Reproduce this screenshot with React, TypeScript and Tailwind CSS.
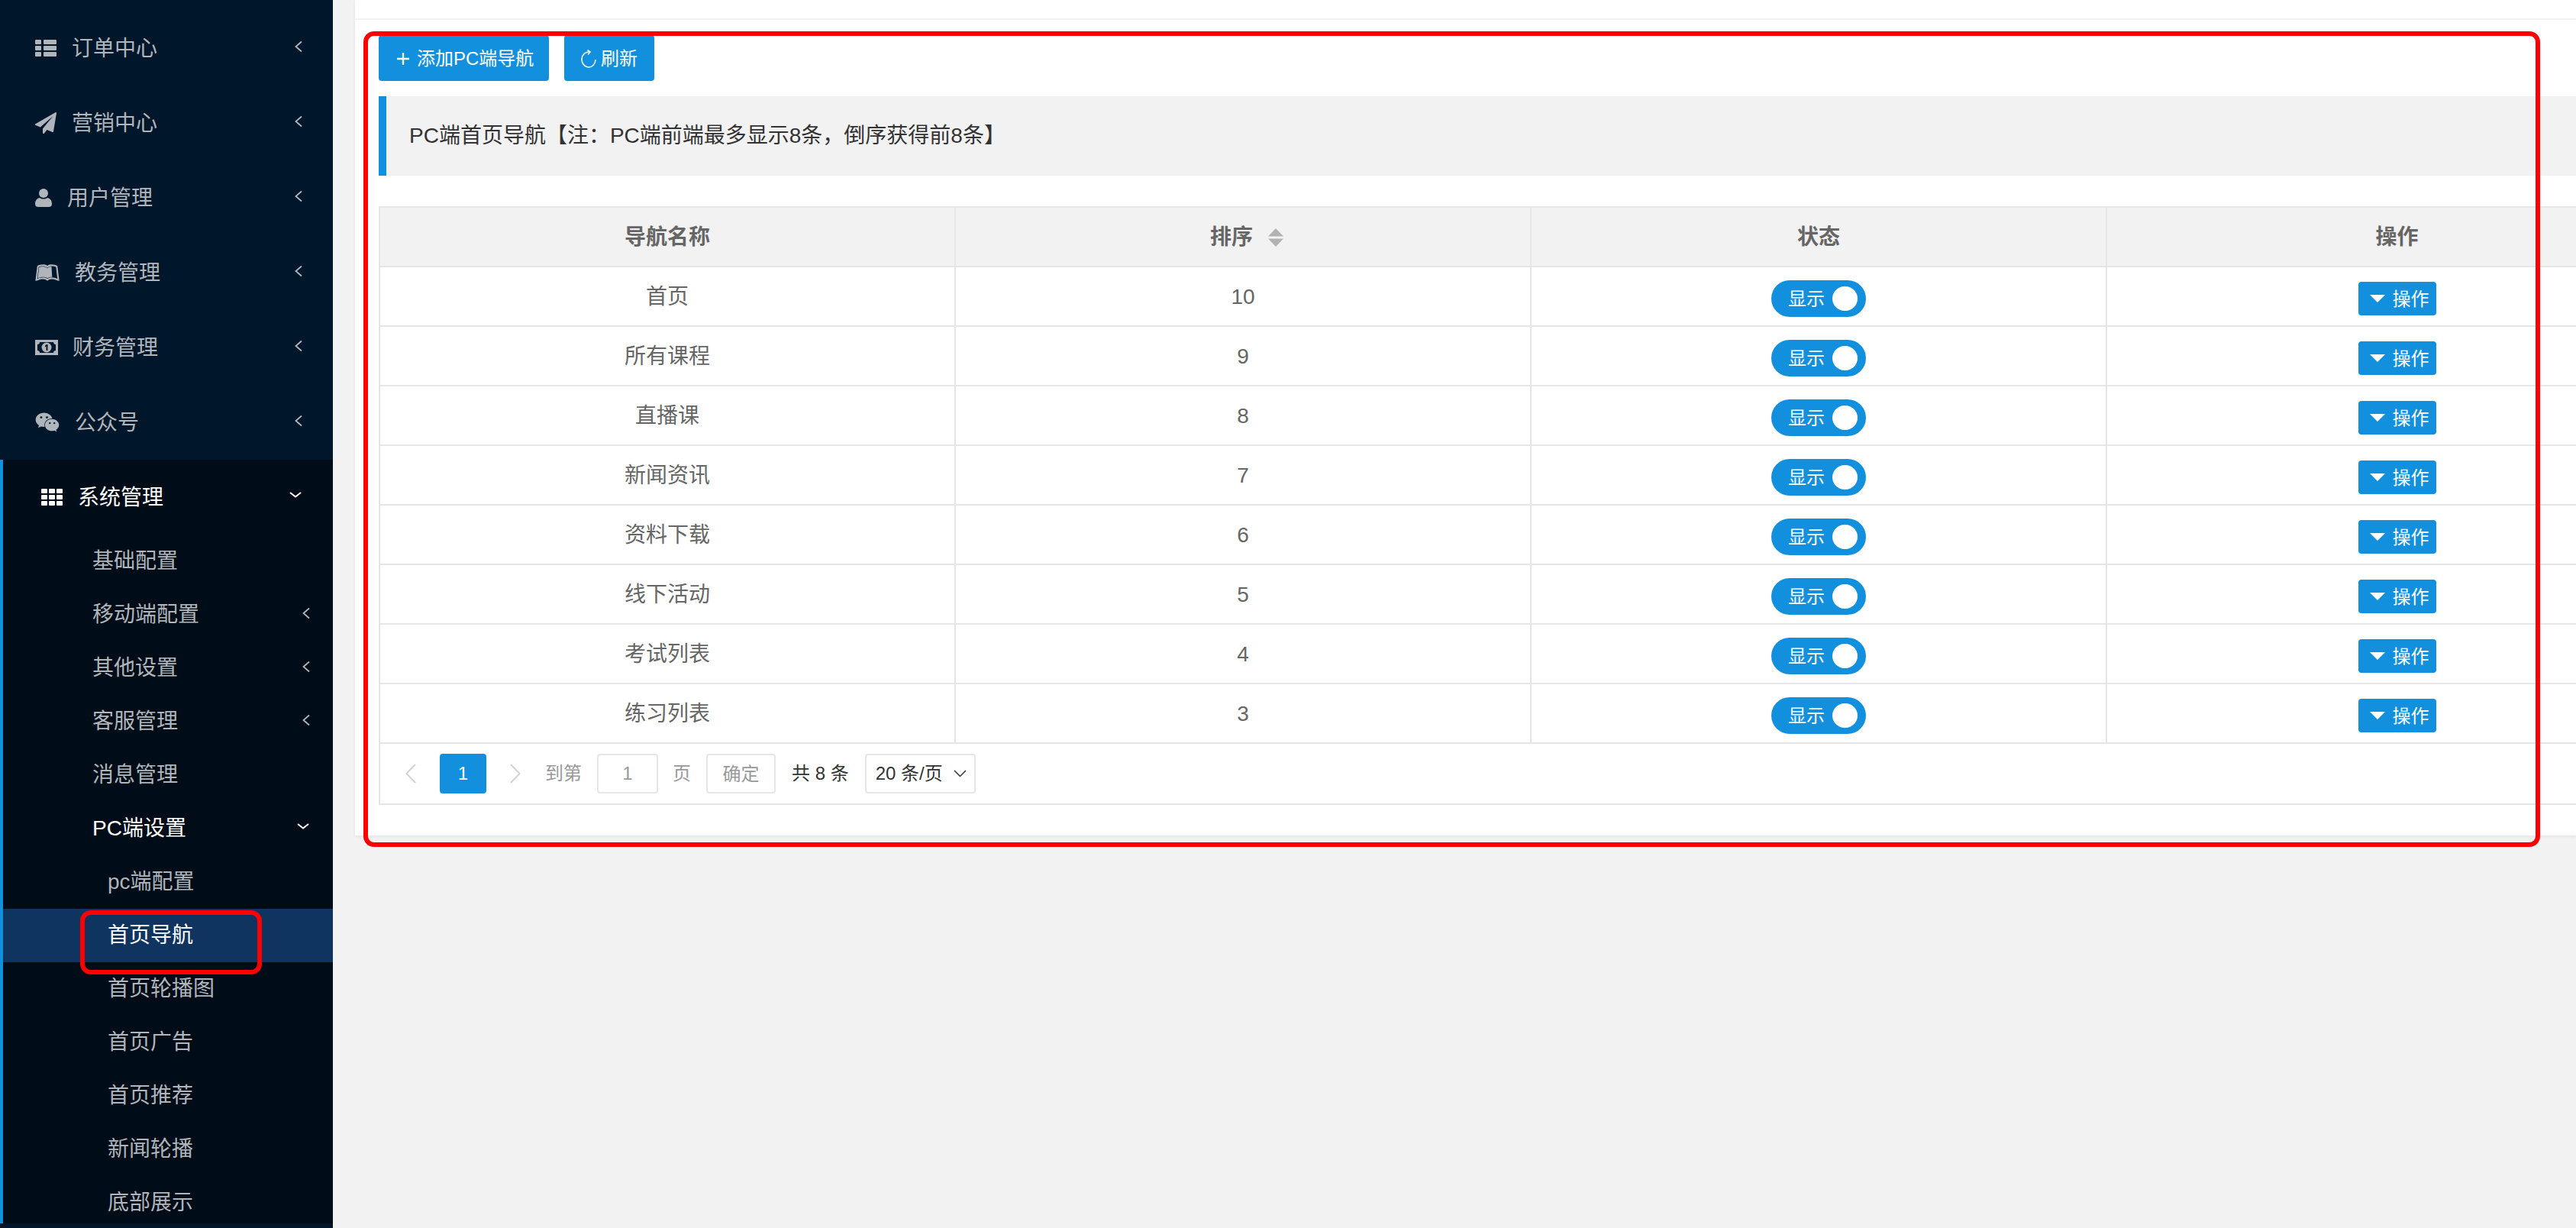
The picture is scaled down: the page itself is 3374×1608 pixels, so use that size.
import { FaLeanpub, FaWeixin } from "react-icons/fa";
import type { ReactNode } from "react";

const font = "font-['Liberation_Sans','Noto_Sans_CJK_SC',sans-serif]";

const ThList = () => (
  <svg width="28" height="22" viewBox="0 0 28 22" fill="currentColor">
    <rect x="0" y="0" width="8" height="6" rx="1" />
    <rect x="0" y="8" width="8" height="6" rx="1" />
    <rect x="0" y="16" width="8" height="6" rx="1" />
    <rect x="11" y="0" width="17" height="6" rx="1" />
    <rect x="11" y="8" width="17" height="6" rx="1" />
    <rect x="11" y="16" width="17" height="6" rx="1" />
  </svg>
);

const Plane = () => (
  <svg width="28" height="28" viewBox="0 0 1792 1792" fill="currentColor">
    <path d="M1764 11q33 24 27 64l-256 1536q-5 29-32 45-14 8-31 8-11 0-24-5l-453-185-242 295q-18 23-49 23-13 0-22-4-19-7-30.500-23.500t-11.500-36.500v-349l864-1059-1069 925-395-162q-37-14-40-55-2-40 32-59l1664-960q15-9 32-9 19 0 36 11z" />
  </svg>
);

const User = () => (
  <svg width="22" height="24" viewBox="0 0 22 24" fill="currentColor">
    <ellipse cx="11" cy="6" rx="6" ry="6" />
    <path d="M0 20 C0 15 3 12.500 6 12 C9 14 13 14 16 12 C19 12.500 22 15 22 20 C22 23 20 24 18 24 L4 24 C2 24 0 23 0 20 Z" />
  </svg>
);

const Money = () => (
  <svg width="30" height="20" viewBox="0 0 30 20" fill="currentColor">
    <path
      fillRule="evenodd"
      d="M0 0 H30 V20 H0 Z M6 3 C6 5 5 6 3 6 V14 C5 14 6 15 6 17 H24 C24 15 25 14 27 14 V6 C25 6 24 5 24 3 Z"
    />
    <circle cx="15" cy="10" r="6.500" />
    <path d="M13 7.500 L15 6 H16.500 V14 H14.500 V8.500 L13 9.500 Z" fill="#00172b" />
  </svg>
);

const Grid = () => (
  <svg width="28" height="22" viewBox="0 0 28 22" fill="currentColor">
    {[0, 8, 16].map((y) =>
      [0, 10, 20].map((x) => <rect key={`${x}-${y}`} x={x} y={y} width="8" height="6" rx="1" />),
    )}
  </svg>
);

const Left = () => (
  <svg className="-mt-[4px]" width="10" height="16" viewBox="0 0 10 16" fill="none" stroke="currentColor" strokeWidth="1.800">
    <path d="M9 1.500 L1.500 8 L9 14.500" />
  </svg>
);

const Down = () => (
  <svg className="-mt-[6px]" width="16" height="10" viewBox="0 0 16 10" fill="none" stroke="currentColor" strokeWidth="2">
    <path d="M1 2 L8 7.500 L15 2" />
  </svg>
);

const topMenu: { icon: ReactNode; label: string; gap: string }[] = [
  { icon: <ThList />, label: "订单中心", gap: "ml-[20px]" },
  { icon: <Plane />, label: "营销中心", gap: "ml-[20px]" },
  { icon: <User />, label: "用户管理", gap: "ml-[20px]" },
  { icon: <FaLeanpub size={32} />, label: "教务管理", gap: "ml-[20px]" },
  { icon: <Money />, label: "财务管理", gap: "ml-[19px]" },
  { icon: <FaWeixin size={32} />, label: "公众号", gap: "ml-[20px]" },
];

const subMenu: { label: string; arrow?: boolean }[] = [
  { label: "基础配置" },
  { label: "移动端配置", arrow: true },
  { label: "其他设置", arrow: true },
  { label: "客服管理", arrow: true },
  { label: "消息管理" },
];

const thirdMenu = ["pc端配置", "首页导航", "首页轮播图", "首页广告", "首页推荐", "新闻轮播", "底部展示"];

const rows = [
  ["首页", "10"],
  ["所有课程", "9"],
  ["直播课", "8"],
  ["新闻资讯", "7"],
  ["资料下载", "6"],
  ["线下活动", "5"],
  ["考试列表", "4"],
  ["练习列表", "3"],
];

const Sidebar = () => (
  <div className="w-[436px] h-full shrink-0 bg-[#00172b] pt-[14px] text-[28px] text-[#b0b5bb] relative">
    {topMenu.map((m) => (
      <div key={m.label} className="h-[98px] pl-[46px] pr-[40px] flex items-center">
        {m.icon}
        <span className={`${m.gap} pt-[2px]`}>{m.label}</span>
        <span className="ml-auto flex">
          <Left />
        </span>
      </div>
    ))}
    <div className="bg-[#000c17] border-l-[4px] border-[#1290de] h-[1000px]">
      <div className="h-[98px] pl-[50px] pr-[41px] flex items-center text-white">
        <Grid />
        <span className="ml-[20px] pt-[2px]">系统管理</span>
        <span className="ml-auto flex">
          <Down />
        </span>
      </div>
      {subMenu.map((s) => (
        <div key={s.label} className="h-[70px] pl-[117px] pr-[30px] flex items-center">
          <span>{s.label}</span>
          {s.arrow && (
            <span className="ml-auto flex">
              <Left />
            </span>
          )}
        </div>
      ))}
      <div className="h-[70px] pl-[117px] pr-[31px] flex items-center text-white">
        <span>PC端设置</span>
        <span className="ml-auto flex">
          <Down />
        </span>
      </div>
      {thirdMenu.map((t) => (
        <div
          key={t}
          className={
            t === "首页导航"
              ? "h-[70px] pl-[137px] flex items-center bg-[#0f3460] text-white"
              : "h-[70px] pl-[137px] flex items-center"
          }
        >
          {t}
        </div>
      ))}
    </div>
    <div className="absolute left-[105px] top-[1192px] w-[238px] h-[84px] border-[6px] border-[#ff0000] rounded-[14px]" />
  </div>
);

const cell = "w-[754px] shrink-0 flex items-center justify-center border-r-2 border-[#e6e6e6] pt-[1px]";
const lastCell = "w-[754px] shrink-0 flex items-center justify-center pt-[1px] pl-[5px]";

const Table = () => (
  <div className="w-[3020px] border-2 border-[#e6e6e6] text-[28px] text-[#666]">
    <div className="flex h-[78px] bg-[#f2f2f2] border-b-2 border-[#e6e6e6] font-bold">
      <div className={cell}>导航名称</div>
      <div className={`${cell} pl-[10px]`}>
        排序
        <svg className="ml-[20px]" width="20" height="24" viewBox="0 0 20 24" fill="#b2b2b2">
          <path d="M10 0 L20 10.500 H0 Z" />
          <path d="M10 24 L0 13.500 H20 Z" />
        </svg>
      </div>
      <div className={cell}>状态</div>
      <div className={lastCell}>操作</div>
    </div>
    {rows.map(([name, sort]) => (
      <div key={name} className="flex h-[78px] border-b-2 border-[#e6e6e6]">
        <div className={cell}>{name}</div>
        <div className={cell}>{sort}</div>
        <div className={cell}>
          <div className="mt-[5px] w-[124px] h-[48px] rounded-full bg-[#1290de] flex items-center pl-[22px] text-[24px] text-white">
            <span className="pt-[2px]">显示</span>
            <span className="ml-[10px] w-[33px] h-[32px] rounded-full bg-white" />
          </div>
        </div>
        <div className={lastCell}>
          <div className="mt-[5px] w-[102px] h-[44px] rounded-[4px] bg-[#1290de] flex items-center pl-[15px] text-[24px] text-white">
            <svg width="20" height="10" viewBox="0 0 20 10" fill="#fff">
              <path d="M0 0 H20 L10 10 Z" />
            </svg>
            <span className="ml-[10px] pt-[2px]">操作</span>
          </div>
        </div>
      </div>
    ))}
    <div className="h-[78px] flex items-center pl-[33px] text-[24px] text-[#999]">
      <svg width="14" height="26" viewBox="0 0 14 26" fill="none" stroke="#d2d2d2" strokeWidth="2">
        <path d="M13 1 L1.500 13 L13 25" />
      </svg>
      <div className="ml-[31px] w-[61px] h-[52px] rounded-[4px] bg-[#1290de] text-white flex items-center justify-center">1</div>
      <svg className="ml-[31px]" width="14" height="26" viewBox="0 0 14 26" fill="none" stroke="#d2d2d2" strokeWidth="2">
        <path d="M1 1 L12.500 13 L1 25" />
      </svg>
      <span className="ml-[32px]">到第</span>
      <div className="ml-[20px] w-[80px] h-[52px] rounded-[4px] border-2 border-[#e6e6e6] flex items-center justify-center">1</div>
      <span className="ml-[19px]">页</span>
      <div className="ml-[20px] w-[91px] h-[52px] rounded-[4px] border-2 border-[#e6e6e6] flex items-center justify-center pt-[2px]">确定</div>
      <span className="ml-[21px] text-[#333]">共 8 条</span>
      <div className="ml-[21px] w-[145px] h-[52px] rounded-[4px] border-2 border-[#e6e6e6] flex items-center pl-[12px] text-[#333]">
        20 条/页
        <svg className="ml-[14px]" width="17" height="10" viewBox="0 0 17 10" fill="none" stroke="#333" strokeWidth="1.500">
          <path d="M1 1 L8.500 8.500 L16 1" />
        </svg>
      </div>
    </div>
  </div>
);

const App = () => {
  return (
    <div className={`${font} w-[3374px] h-[1608px] overflow-hidden flex bg-[#f2f2f2]`}>
      <Sidebar />
      <div className="flex-1 pl-[29px] min-w-0 relative">
        <div className="h-[1094px] bg-white shadow-[0_2px_4px_rgba(0,0,0,0.05)]">
          <div className="h-[26px] border-b-2 border-[#f3f3f3]" />
          <div className="pl-[31px] pt-[20px]">
            <div className="flex gap-[20px] text-[24px] text-white">
              <div className="w-[223px] h-[60px] rounded-[4px] bg-[#1290de] flex items-center pl-[24px] pt-[2px]">
                <svg className="mr-[10px]" width="16" height="16" viewBox="0 0 16 16" stroke="#fff" strokeWidth="2.400">
                  <path d="M8 0 V16 M0 8 H16" />
                </svg>
                添加PC端导航
              </div>
              <div className="w-[118px] h-[60px] rounded-[4px] bg-[#1290de] flex items-center pl-[22px] pt-[2px]">
                <svg className="mr-[6px]" width="20" height="24" viewBox="0 0 20 24" fill="none" stroke="#fff" strokeWidth="1.600">
                  <path d="M11 3 A9 10 0 1 0 19 13" />
                  <path d="M8.500 0.500 L12 3 L9 6.500" />
                </svg>
                刷新
              </div>
            </div>
            <div className="mt-[20px] h-[104px] bg-[#f2f2f2] border-l-[10px] border-[#1290de] pl-[30px] flex items-center text-[28px] text-[#333]">
              PC端首页导航【注：PC端前端最多显示8条，倒序获得前8条】
            </div>
            <div className="mt-[40px]">
              <Table />
            </div>
          </div>
        </div>
        <div className="absolute left-[40px] top-[41px] w-[2851px] h-[1068px] border-[6px] border-[#ff0000] rounded-[14px]" />
      </div>
    </div>
  );
};

export default App;
